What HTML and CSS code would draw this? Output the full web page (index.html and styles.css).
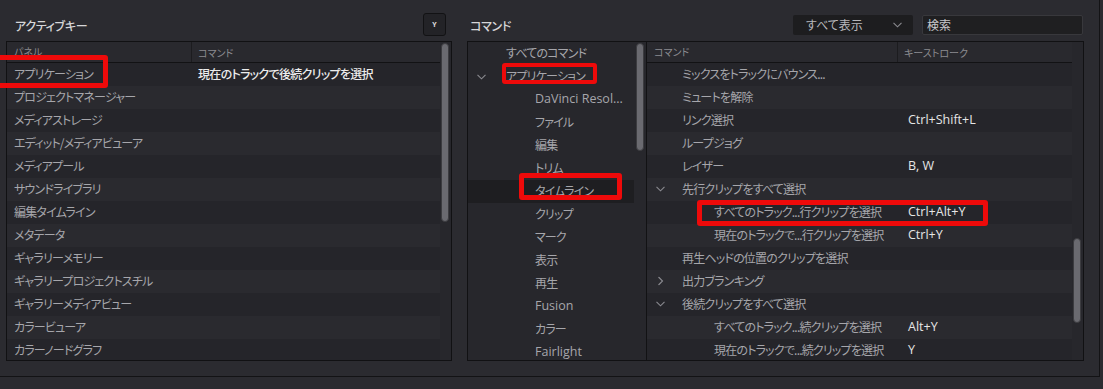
FILE: index.html
```html
<!DOCTYPE html>
<html lang="ja">
<head>
<meta charset="utf-8">
<title>キーボードカスタマイズ</title>
<link rel="stylesheet" href="styles.css">
</head>
<body>
<div class="frame">
  <section class="pane pane-left">
    <div class="pane-head">
      <span class="title">アクティブキー</span>
      <button class="key-btn">Y</button>
    </div>
    <div class="table">
      <div class="tbl-main">
        <div class="thead">
          <div class="col-panel">パネル</div>
          <div class="col-cmd">コマンド</div>
        </div>
        <div class="rows">
          <div class="row"><span class="col-panel">アプリケーション</span><span class="col-cmd bright">現在のトラックで後続クリップを選択</span></div>
          <div class="row"><span class="col-panel">プロジェクトマネージャー</span></div>
          <div class="row"><span class="col-panel">メディアストレージ</span></div>
          <div class="row"><span class="col-panel">エディット/メディアビューア</span></div>
          <div class="row"><span class="col-panel">メディアプール</span></div>
          <div class="row"><span class="col-panel">サウンドライブラリ</span></div>
          <div class="row"><span class="col-panel">編集タイムライン</span></div>
          <div class="row"><span class="col-panel">メタデータ</span></div>
          <div class="row"><span class="col-panel">ギャラリーメモリー</span></div>
          <div class="row"><span class="col-panel">ギャラリープロジェクトスチル</span></div>
          <div class="row"><span class="col-panel">ギャラリーメディアビュー</span></div>
          <div class="row"><span class="col-panel">カラービューア</span></div>
          <div class="row"><span class="col-panel">カラーノードグラフ</span></div>
        </div>
      </div>
      <div class="scroll"><div class="thumb thumb-left"></div></div>
    </div>
  </section>

  <section class="pane pane-right">
    <div class="pane-head">
      <span class="title title-right">コマンド</span>
      <div class="dropdown"><span>すべて表示</span>
        <svg class="dd-chev" width="9" height="6" viewBox="0 0 9 6"><polyline points="0.5,0.8 4.5,4.8 8.5,0.8" fill="none" stroke="#8a8a90" stroke-width="1.1"/></svg>
      </div>
      <div class="search">検索</div>
    </div>
    <div class="table table-right">
      <div class="tree">
        <div class="tree-rows">
          <div class="trow lv0">すべてのコマンド</div>
          <div class="trow lv0"><svg class="chev tchev" width="9" height="6" viewBox="0 0 9 6"><polyline points="0.5,0.8 4.5,4.8 8.5,0.8" fill="none" stroke="#8a8a90" stroke-width="1.1"/></svg>アプリケーション</div>
          <div class="trow lv1 latin">DaVinci Resol...</div>
          <div class="trow lv1">ファイル</div>
          <div class="trow lv1">編集</div>
          <div class="trow lv1">トリム</div>
          <div class="trow lv1 selected">タイムライン</div>
          <div class="trow lv1">クリップ</div>
          <div class="trow lv1">マーク</div>
          <div class="trow lv1">表示</div>
          <div class="trow lv1">再生</div>
          <div class="trow lv1 latin">Fusion</div>
          <div class="trow lv1">カラー</div>
          <div class="trow lv1 latin">Fairlight</div>
        </div>
        <div class="scroll tree-scroll"><div class="thumb thumb-tree"></div></div>
      </div>
      <div class="cmdlist">
        <div class="tbl-main">
          <div class="thead">
            <div class="col-name">コマンド</div>
            <div class="col-key">キーストローク</div>
          </div>
          <div class="rows">
            <div class="row"><span class="col-name lv0">ミックスをトラックにバウンス...</span></div>
            <div class="row"><span class="col-name lv0">ミュートを解除</span></div>
            <div class="row"><span class="col-name lv0">リンク選択</span><span class="col-key">Ctrl+Shift+L</span></div>
            <div class="row"><span class="col-name lv0">ループジョグ</span></div>
            <div class="row"><span class="col-name lv0">レイザー</span><span class="col-key">B, W</span></div>
            <div class="row"><span class="col-name lv0"><svg class="chev" width="9" height="6" viewBox="0 0 9 6"><polyline points="0.5,0.8 4.5,4.8 8.5,0.8" fill="none" stroke="#8a8a90" stroke-width="1.1"/></svg>先行クリップをすべて選択</span></div>
            <div class="row"><span class="col-name lv1">すべてのトラック...行クリップを選択</span><span class="col-key">Ctrl+Alt+Y</span></div>
            <div class="row"><span class="col-name lv1">現在のトラックで...行クリップを選択</span><span class="col-key">Ctrl+Y</span></div>
            <div class="row"><span class="col-name lv0">再生ヘッドの位置のクリップを選択</span></div>
            <div class="row"><span class="col-name lv0"><svg class="chev" width="9" height="9" viewBox="0 0 9 9"><polyline points="2.5,0.5 6.5,4.5 2.5,8.5" fill="none" stroke="#8a8a90" stroke-width="1.1"/></svg>出力ブランキング</span></div>
            <div class="row"><span class="col-name lv0"><svg class="chev" width="9" height="6" viewBox="0 0 9 6"><polyline points="0.5,0.8 4.5,4.8 8.5,0.8" fill="none" stroke="#8a8a90" stroke-width="1.1"/></svg>後続クリップをすべて選択</span></div>
            <div class="row"><span class="col-name lv1">すべてのトラック...続クリップを選択</span><span class="col-key">Alt+Y</span></div>
            <div class="row"><span class="col-name lv1">現在のトラックで...続クリップを選択</span><span class="col-key">Y</span></div>
          </div>
        </div>
        <div class="scroll list-scroll"><div class="thumb thumb-list"></div></div>
      </div>
    </div>
  </section>

  <div class="mark mark-1"></div>
  <div class="mark mark-2"></div>
  <div class="mark mark-3"></div>
  <div class="mark mark-4"></div>
</div>
</body>
</html>
```

FILE: styles.css
```css
* { box-sizing: border-box; }
html, body { margin: 0; padding: 0; }
body {
  background: #2b2b30;
  width: 1103px;
  height: 389px;
  overflow: hidden;
  font-family: "Noto Sans CJK JP", "Open Sans", sans-serif;
  font-feature-settings: "palt";
  font-size: 12px;
  color: #a6a6ab;
}
.frame {
  position: relative;
  width: 1100px;
  height: 377px;
  border-right: 1px solid #131315;
  border-bottom: 1px solid #131315;
  padding: 13px 0 0 6px;
  display: flex;
  gap: 15px;
  background: #2b2b30;
}
.pane { display: flex; flex-direction: column; }
.pane-left { width: 446px; }
.pane-right { width: 617px; }
.pane-head {
  height: 28px;
  display: flex;
  align-items: flex-start;
}
.title {
  line-height: 26px;
  padding-left: 9px;
  color: #d6d6d8;
  font-size: 12px;
  font-weight: 500;
  letter-spacing: -0.3px;
}
.title-right { padding-left: 3px; }
.key-btn {
  margin-left: auto;
  margin-right: 6px;
  width: 23px;
  height: 23px;
  padding: 0;
  background: #232327;
  border: 1px solid #121214;
  border-radius: 3px;
  color: #e0e0e0;
  font-family: "Open Sans", sans-serif;
  font-size: 7px;
  font-weight: 700;
  line-height: 21px;
  text-align: center;
}
.dropdown {
  margin-left: auto;
  margin-top: 2px;
  width: 120px;
  height: 20px;
  background: #1d1d1f;
  border-radius: 2px;
  display: flex;
  align-items: center;
  padding-left: 13px;
  color: #b8b8bc;
  line-height: 20px;
}
.dd-chev { margin-left: auto; margin-right: 11px; }
.search {
  margin-left: 9px;
  margin-right: 1px;
  margin-top: 2px;
  width: 161px;
  height: 20px;
  background: #1f1f21;
  border: 1px solid #38383c;
  border-radius: 2px;
  padding-left: 4px;
  line-height: 18px;
  color: #c8c8cc;
}
.table {
  height: 320px;
  border: 1px solid #111113;
  background: #27272c;
  display: flex;
  overflow: hidden;
}
.tbl-main { flex: 1; display: flex; flex-direction: column; min-width: 0; }
.thead {
  height: 21px;
  flex: none;
  display: flex;
  align-items: center;
  border-bottom: 1px solid #121214;
  background: #29292e;
  font-size: 10px;
  color: #8c8c91;
}
.thead .col-panel { width: 185px; padding-left: 7px; height: 20px; line-height: 20px; border-right: 1px solid #1c1c1f; }
.thead .col-cmd { padding-left: 6px; }
.rows { flex: 1; }
.row {
  height: 23px;
  display: flex;
  align-items: center;
  white-space: nowrap;
  background: #25252a;
  padding-bottom: 2px;
  letter-spacing: -0.8px;
}
.row:nth-child(even) { background: #2a2a2f; }
.row .col-panel { width: 191px; padding-left: 7px; }
.row .col-cmd { padding-left: 0; }
.bright { color: #ececec; font-weight: 500; letter-spacing: -0.7px; }
.scroll { width: 11px; flex: none; position: relative; }
.thumb {
  position: absolute;
  left: 1px;
  width: 8px;
  background: #6a6a70;
  border: 1px solid #3c3c40;
  border-radius: 4px;
}
.thumb-left { top: 1px; height: 179px; }

/* right side */
.table-right { background: #27272c; }
.tree {
  width: 179px;
  flex: none;
  display: flex;
  border-right: 1px solid #121214;
  overflow: hidden;
}
.tree-rows { flex: 1; }
.trow {
  height: 23px;
  line-height: 22px;
  white-space: nowrap;
  position: relative;
  margin-right: 2px;
  letter-spacing: -0.8px;
}
.trow.lv0 { padding-left: 38px; }
.trow.lv1 { padding-left: 67px; }
.trow.selected { background: #1e1e21; }
.latin { font-family: "Open Sans", sans-serif; font-size: 12.5px; letter-spacing: 0; }
.tchev { position: absolute; left: 11px; top: 9px; }
.tree-scroll { width: 10px; }
.thumb-tree { top: 1px; height: 108px; left: 0; }

.cmdlist { flex: 1; display: flex; min-width: 0; }
.cmdlist .thead .col-name { width: 251px; padding-left: 7px; height: 20px; line-height: 20px; border-right: 1px solid #1c1c1f; }
.cmdlist .thead .col-key { padding-left: 6px; }
.row .col-name { width: 261px; position: relative; }
.row .col-name.lv0 { padding-left: 35px; }
.row .col-name.lv1 { padding-left: 67px; }
.row .col-key { font-family: "Open Sans", sans-serif; color: #e6e6e6; font-size: 12.5px; letter-spacing: 0; }
.chev { position: absolute; left: 9px; top: 50%; transform: translateY(-50%); }
.list-scroll { width: 11px; }
.thumb-list { top: 196px; height: 85px; }

/* annotation marks */
.mark {
  position: absolute;
  border: 5px solid #ee0a0a;
  border-radius: 3px;
}
.mark-1 { left: -6px; top: 55px; width: 114px; height: 33px; }
.mark-2 { left: 502px; top: 63px; width: 95px; height: 21px; border-width: 4px; }
.mark-3 { left: 519px; top: 173px; width: 103px; height: 27px; }
.mark-4 { left: 697px; top: 200px; width: 291px; height: 26px; }
```
